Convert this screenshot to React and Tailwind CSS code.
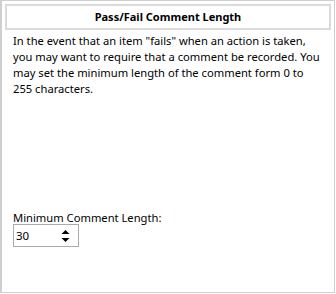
export default function App() {
  return (
    <div className="w-[336px] h-[294px] bg-white" style={{ fontFamily: '"Noto Sans", sans-serif' }}>
      <div className="w-[335px] h-[293px] border border-l-2 border-[#cfcfcf] flex flex-col">
        <div className="mx-[3px] mt-[3px] h-[26px] border-2 border-[#dadada] flex items-center justify-center">
          <span className="text-[11px] font-bold text-black">Pass/Fail Comment Length</span>
        </div>
        <p className="px-[11px] pt-[3px] text-[11.2px] leading-[16px] text-black whitespace-nowrap">
          In the event that an item "fails" when an action is taken,<br />
          you may want to require that a comment be recorded. You<br />
          may set the minimum length of the comment form 0 to<br />
          255 characters.
        </p>
        <div className="mt-auto mb-[45px] px-[11px] flex flex-col">
          <span className="text-[11.2px] leading-[16px] text-black">Minimum Comment Length:</span>
          <div className="mt-[-2px] w-[66px] h-[23px] border border-[#ababab] flex items-center justify-between pl-[2px] pr-[8px]">
            <span className="text-[11.5px] text-black">30</span>
            <svg width="9" height="14" viewBox="0 0 9 14">
              <path d="M0.5 5 L4.5 1 L8.5 5 Z" fill="#000" />
              <path d="M0.5 9 L4.5 13 L8.5 9 Z" fill="#000" />
            </svg>
          </div>
        </div>
      </div>
    </div>
  );
}
